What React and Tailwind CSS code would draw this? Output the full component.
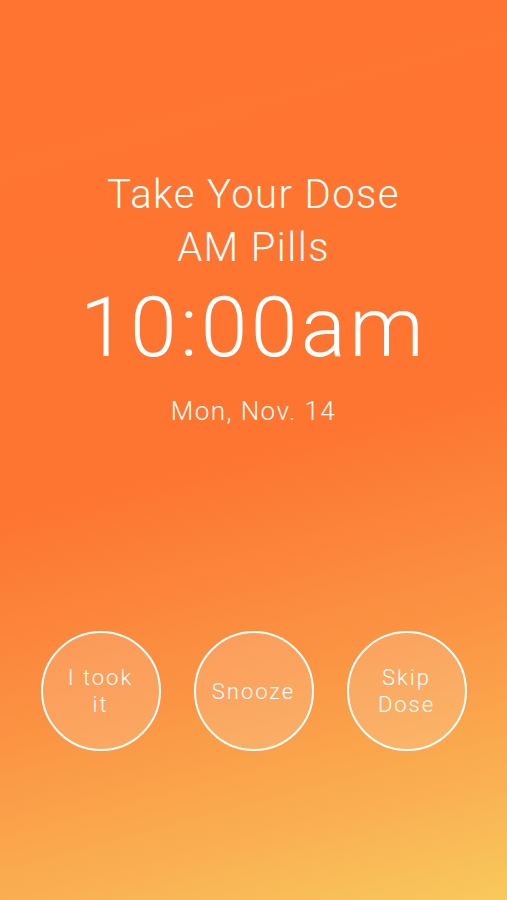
import React from 'react';

const font = { fontFamily: 'Roboto, "Liberation Sans", sans-serif' };

const DoseButton = ({ children }) => (
  <button className="w-[120px] h-[120px] rounded-full border-2 border-white bg-white/15 flex items-center justify-center text-white text-[22px] font-light leading-[27px] tracking-[0.09em] text-center">
    {children}
  </button>
);

export default function App() {
  return (
    <div
      className="w-full h-[900px] flex flex-col items-center text-white bg-[linear-gradient(165deg,#ff7430_0%,#fd7531_50%,#fb9444_72%,#fab052_88%,#f8c95c_100%)]"
      style={font}
    >
      <div className="mt-[168px] flex flex-col items-center tracking-[0.09em]">
        <h1 className="text-[40px] font-light leading-[53px]">Take Your Dose</h1>
        <h2 className="text-[40px] font-light leading-[53px]">AM Pills</h2>
        <div className="text-[84px] font-light leading-[84px] mt-[12px] tracking-[0.04em]">10:00am</div>
        <div className="text-[26px] font-light mt-[22px]">Mon, Nov. 14</div>
      </div>
      <div className="mt-[200px] flex gap-[33px]">
        <DoseButton>I took<br />it</DoseButton>
        <DoseButton>Snooze</DoseButton>
        <DoseButton>Skip<br />Dose</DoseButton>
      </div>
    </div>
  );
}
